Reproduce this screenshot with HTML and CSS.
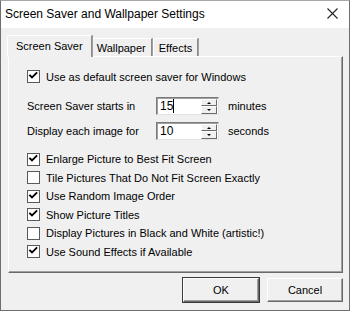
FILE: index.html
```html
<!DOCTYPE html>
<html lang="en">
<head>
  <meta charset="UTF-8" />
  <title>Screen Saver and Wallpaper Settings</title>
  <link rel="stylesheet" href="styles.css">
</head>
<body>

<div class="window">
  <div class="titlebar">
    <span class="title">Screen Saver and Wallpaper Settings</span>
    <svg class="close" viewBox="0 0 11 11" width="11" height="11">
      <path d="M0.5 0.5 L10.5 10.5 M10.5 0.5 L0.5 10.5" stroke="#222" stroke-width="1.1" fill="none"/>
    </svg>
  </div>

  <div class="content">
    <div class="tabs">
      <div class="tab active">Screen Saver</div>
      <div class="tab">Wallpaper</div>
      <div class="tab">Effects</div>
    </div>

    <div class="panel">
      <label class="check first"><span class="box"><svg class="tick" viewBox="0 0 11 11"><path d="M2 4.5 L4 6.5 L8.5 2"/></svg></span>Use as default screen saver for Windows</label>

      <div class="field">
        <span class="field-label">Screen Saver starts in</span>
        <span class="spin"><span class="value">15<span class="caret"></span></span><span class="arrows"><span class="up"></span><span class="down"></span></span></span>
        <span class="unit">minutes</span>
      </div>
      <div class="field">
        <span class="field-label">Display each image for</span>
        <span class="spin"><span class="value">10</span><span class="arrows"><span class="up"></span><span class="down"></span></span></span>
        <span class="unit">seconds</span>
      </div>

      <div class="options">
        <label class="check"><span class="box"><svg class="tick" viewBox="0 0 11 11"><path d="M2 4.5 L4 6.5 L8.5 2"/></svg></span>Enlarge Picture to Best Fit Screen</label>
        <label class="check"><span class="box"></span>Tile Pictures That Do Not Fit Screen Exactly</label>
        <label class="check"><span class="box"><svg class="tick" viewBox="0 0 11 11"><path d="M2 4.5 L4 6.5 L8.5 2"/></svg></span>Use Random Image Order</label>
        <label class="check"><span class="box"><svg class="tick" viewBox="0 0 11 11"><path d="M2 4.5 L4 6.5 L8.5 2"/></svg></span>Show Picture Titles</label>
        <label class="check"><span class="box"></span>Display Pictures in Black and White (artistic!)</label>
        <label class="check"><span class="box"><svg class="tick" viewBox="0 0 11 11"><path d="M2 4.5 L4 6.5 L8.5 2"/></svg></span>Use Sound Effects if Available</label>
      </div>
    </div>

    <div class="buttons">
      <button class="btn default">OK</button>
      <button class="btn">Cancel</button>
    </div>
  </div>
</div>

</body>
</html>
```

FILE: styles.css
```css
* {
  box-sizing: border-box;
  margin: 0;
  padding: 0;
}

body {
  width: 350px;
  height: 311px;
  overflow: hidden;
  font-family: "Liberation Sans", Arial, sans-serif;
  font-size: 11px;
  color: #000;
  background: #f0f0f0;
}

.window {
  width: 350px;
  height: 311px;
  border: 1px solid #6e6e6e;
  border-top-color: #a8a8a8;
  display: flex;
  flex-direction: column;
  background: #f0f0f0;
}

.titlebar {
  height: 27px;
  background: #fff;
  display: flex;
  align-items: center;
  justify-content: space-between;
  padding: 0 11px 0 4px;
}

.title {
  font-size: 12px;
  color: #000;
  margin-top: -1px;
}

.close {
  display: block;
  margin-top: -2px;
}

.content {
  flex: 1;
  padding: 7px 6px 0 7px;
  display: flex;
  flex-direction: column;
}

/* tabs */
.tabs {
  display: flex;
  align-items: flex-end;
  height: 21px;
  padding-left: 1px;
  position: relative;
  z-index: 1;
}

.tab {
  height: 18px;
  padding: 0 5px;
  line-height: 18px;
  border-top: 1px solid #fff;
  border-left: 1px solid #fff;
  border-right: 1px solid #8a8a8a;
  box-shadow: 1px 0 0 #a0a0a0;
  background: #f0f0f0;
  margin-right: 1px;
}

.tab.active {
  height: 22px;
  line-height: 20px;
  padding: 0 8px 0 8px;
  margin-left: -2px;
  margin-right: -1px;
  margin-bottom: -1px;
  position: relative;
}

/* panel */
.panel {
  height: 217px;
  border-top: 1px solid #fff;
  border-left: 1px solid #fff;
  border-right: 1px solid #696969;
  border-bottom: 1px solid #696969;
  box-shadow: inset -1px -1px 0 #a0a0a0;
  padding: 12px 0 0 18px;
  display: flex;
  flex-direction: column;
}

.check {
  display: flex;
  align-items: center;
  gap: 6px;
  height: 18.5px;
  white-space: nowrap;
}

.check.first {
  height: 15px;
  margin-bottom: 13px;
}

.box {
  width: 13px;
  height: 13px;
  border: 1px solid #5a5a5a;
  background: #fff;
  flex-shrink: 0;
  display: flex;
}

.tick {
  width: 11px;
  height: 11px;
  display: block;
}

.tick path {
  fill: none;
  stroke: #000;
  stroke-width: 1.8;
  stroke-linecap: square;
}

/* spin fields */
.field {
  display: flex;
  align-items: center;
  height: 18px;
  margin-bottom: 7px;
}

.field-label {
  width: 129px;
}

.spin {
  width: 63px;
  height: 18px;
  background: #fff;
  border-top: 1px solid #7a7a7a;
  border-left: 1px solid #7a7a7a;
  border-right: 1px solid #e3e3e3;
  border-bottom: 1px solid #e3e3e3;
  box-shadow: inset 1px 1px 0 #a0a0a0;
  display: flex;
  align-items: center;
  justify-content: space-between;
  padding: 0 1px 0 3px;
}

.value {
  font-size: 12px;
  display: flex;
  align-items: center;
}

.caret {
  display: inline-block;
  width: 1px;
  height: 14px;
  background: #000;
}

.arrows {
  width: 16px;
  height: 15px;
  display: flex;
  flex-direction: column;
}

.arrows span {
  flex: 1;
  background: #f0f0f0;
  border-top: 1px solid #fff;
  border-left: 1px solid #fff;
  border-right: 1px solid #696969;
  border-bottom: 1px solid #696969;
  position: relative;
}

.arrows span::after {
  content: "";
  position: absolute;
  left: 5px;
  top: 2px;
  border-left: 2px solid transparent;
  border-right: 2px solid transparent;
}

.arrows .up::after {
  border-bottom: 2px solid #000;
}

.arrows .down::after {
  border-top: 2px solid #000;
}

.unit {
  margin-left: 9px;
}

.options {
  margin-top: 3px;
  display: flex;
  flex-direction: column;
}

/* buttons */
.buttons {
  display: flex;
  justify-content: flex-end;
  gap: 8px;
  padding-top: 5px;
}

.btn {
  width: 76px;
  height: 24px;
  font-family: "Liberation Sans", Arial, sans-serif;
  font-size: 11px;
  color: #000;
  background: #f0f0f0;
  border-top: 1px solid #fff;
  border-left: 1px solid #fff;
  border-right: 1px solid #696969;
  border-bottom: 1px solid #696969;
  box-shadow: inset -1px -1px 0 #a0a0a0;
}

.btn.default {
  outline: 1px solid #3a3a3a;
  outline-offset: 0;
}
```
